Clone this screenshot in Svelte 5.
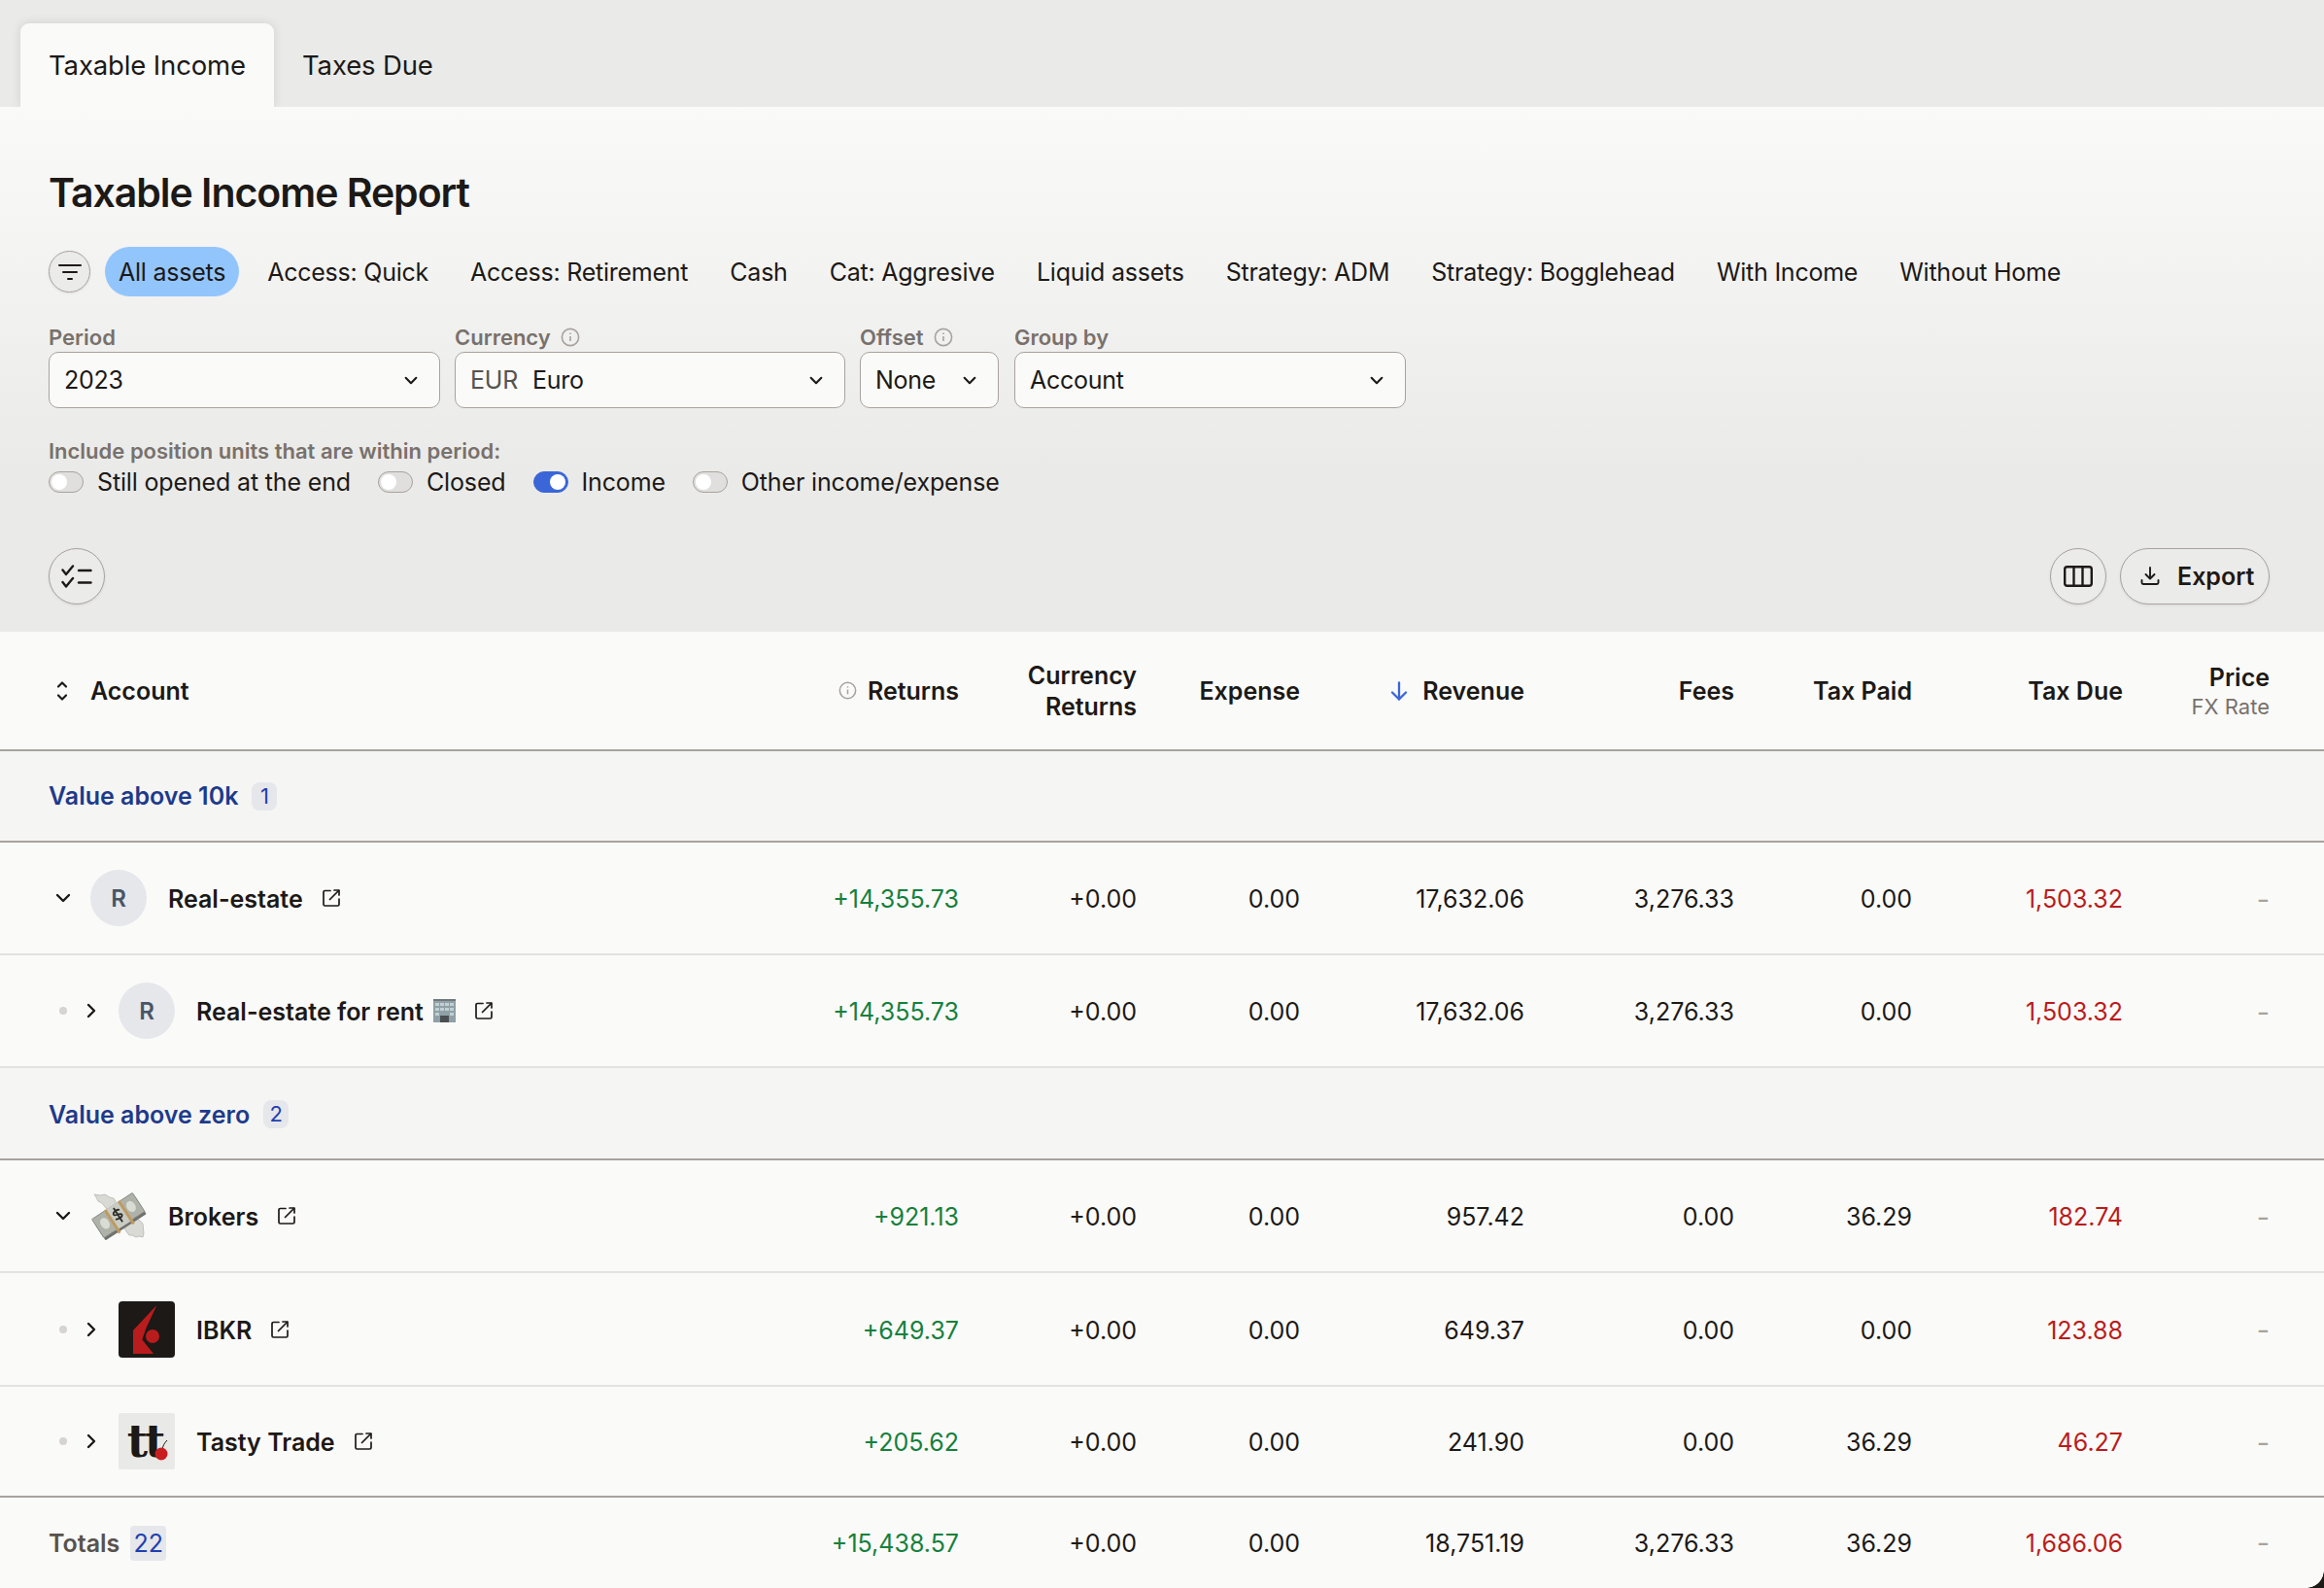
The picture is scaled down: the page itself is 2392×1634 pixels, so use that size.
<script>
    const chips = ['All assets', 'Access: Quick', 'Access: Retirement', 'Cash', 'Cat: Aggresive', 'Liquid assets', 'Strategy: ADM', 'Strategy: Bogglehead', 'With Income', 'Without Home'];
    const toggles = [
        { label: 'Still opened at the end', on: false },
        { label: 'Closed', on: false },
        { label: 'Income', on: true },
        { label: 'Other income/expense', on: false }
    ];
    const rows = [
        { group: 'Value above 10k', count: 1 },
        { name: 'Real-estate', logo: 'R', open: true, returns: '+14,355.73', revenue: '17,632.06', fees: '3,276.33', paid: '0.00', due: '1,503.32' },
        { name: 'Real-estate for rent', logo: 'R', child: true, building: true, returns: '+14,355.73', revenue: '17,632.06', fees: '3,276.33', paid: '0.00', due: '1,503.32' },
        { group: 'Value above zero', count: 2 },
        { name: 'Brokers', logo: 'money', open: true, returns: '+921.13', revenue: '957.42', fees: '0.00', paid: '36.29', due: '182.74' },
        { name: 'IBKR', logo: 'ibkr', child: true, returns: '+649.37', revenue: '649.37', fees: '0.00', paid: '0.00', due: '123.88' },
        { name: 'Tasty Trade', logo: 'tt', child: true, last: true, returns: '+205.62', revenue: '241.90', fees: '0.00', paid: '36.29', due: '46.27' }
    ];
</script>

{#snippet info(size)}
    <svg class="info" width={size} height={size} viewBox="0 0 20 20" fill="none" stroke="currentColor" stroke-width="1.6">
        <circle cx="10" cy="10" r="8.6" />
        <path d="M10 9v5" />
        <path d="M10 5.6v1.4" />
    </svg>
{/snippet}

{#snippet chevron()}
    <svg width="18" height="12" viewBox="0 0 18 12" fill="none" stroke="currentColor" stroke-width="2.4" stroke-linecap="round" stroke-linejoin="round">
        <path d="M3 3l6 6 6-6" />
    </svg>
{/snippet}

{#snippet launch()}
    <svg class="launch" width="18" height="18" viewBox="0 0 18 18" fill="none" stroke="currentColor" stroke-width="1.7" stroke-linecap="round" stroke-linejoin="round">
        <path d="M8 1.5H2.5a1.5 1.5 0 0 0-1.5 1.5v12.5A1.500 1.500 0 0 0 2.500 17h13a1.500 1.500 0 0 0 1.500-1.500V10" />
        <path d="M7.500 10.500 16.500 1.500" />
        <path d="M12 1h5v5" />
    </svg>
{/snippet}

<div class="page">
    <nav class="tabs">
        <button class="tab active">Taxable Income</button>
        <button class="tab">Taxes Due</button>
    </nav>

    <section class="panel">
        <h1>Taxable Income Report</h1>

        <div class="chips">
            <button class="round small" aria-label="Filter">
                <svg width="24" height="18" viewBox="0 0 24 18" fill="none" stroke="#1c1917" stroke-width="2" stroke-linecap="round">
                    <path d="M1 2h22" />
                    <path d="M5 9h14" />
                    <path d="M10 16h4" />
                </svg>
            </button>
            <div class="chip-list">
                {#each chips as chip, i}
                    <span class="chip" class:selected={i === 0}>{chip}</span>
                {/each}
            </div>
        </div>

        <div class="fields">
            <div class="field period">
                <span class="label">Period</span>
                <div class="select"><span>2023</span>{@render chevron()}</div>
            </div>
            <div class="field currency">
                <span class="label">Currency {@render info(20)}</span>
                <div class="select"><span><span class="code">EUR</span>Euro</span>{@render chevron()}</div>
            </div>
            <div class="field offset">
                <span class="label">Offset {@render info(20)}</span>
                <div class="select"><span>None</span>{@render chevron()}</div>
            </div>
            <div class="field groupby">
                <span class="label">Group by</span>
                <div class="select"><span>Account</span>{@render chevron()}</div>
            </div>
        </div>

        <p class="include">Include position units that are within period:</p>
        <div class="toggles">
            {#each toggles as t}
                <label class="toggle-item">
                    <span class="toggle" class:on={t.on}><span class="knob"></span></span>
                    {t.label}
                </label>
            {/each}
        </div>

        <div class="actions">
            <button class="round" aria-label="Select">
                <svg width="32" height="25" viewBox="0 0 32 25" fill="none" stroke="#1c1917" stroke-width="2.4" stroke-linecap="round" stroke-linejoin="round">
                    <path d="M1.500 5.500 5 10 12 1.500" />
                    <path d="M1.500 18 5 22.500 12 14" />
                    <path d="M18 6h12.500" />
                    <path d="M18 18.500h12.500" />
                </svg>
            </button>
            <div class="actions-right">
                <button class="round" aria-label="Columns">
                    <svg width="30" height="22" viewBox="0 0 30 22" fill="none" stroke="#1c1917" stroke-width="2.4">
                        <rect x="1.200" y="1.200" width="27.600" height="19.600" rx="2.500" />
                        <path d="M10.500 1v20" />
                        <path d="M19.500 1v20" />
                    </svg>
                </button>
                <button class="export">
                    <svg width="20" height="20" viewBox="0 0 20 20" fill="none" stroke="#1c1917" stroke-width="1.900" stroke-linecap="round" stroke-linejoin="round">
                        <path d="M10 1v11" />
                        <path d="M5.500 8 10 12.500 14.500 8" />
                        <path d="M1.500 14v2.500a1.500 1.500 0 0 0 1.500 1.500h14a1.500 1.500 0 0 0 1.500-1.500V14" />
                    </svg>
                    Export
                </button>
            </div>
        </div>
    </section>

    <table>
        <colgroup>
            <col style="width: 760px" />
            <col style="width: 227px" />
            <col style="width: 183px" />
            <col style="width: 168px" />
            <col style="width: 231px" />
            <col style="width: 216px" />
            <col style="width: 183px" />
            <col style="width: 217px" />
            <col style="width: 207px" />
        </colgroup>
        <thead>
            <tr>
                <th class="left">
                    <div class="account-head">
                        <svg width="14" height="22" viewBox="0 0 14 22" fill="none" stroke="#1c1917" stroke-width="2.2" stroke-linecap="round" stroke-linejoin="round">
                            <path d="M3 6.500 7 2.500l4 4" />
                            <path d="M3 15.500l4 4 4-4" />
                        </svg>
                        Account
                    </div>
                </th>
                <th><div class="returns-head">{@render info(19)}Returns</div></th>
                <th>Currency<br />Returns</th>
                <th>Expense</th>
                <th>
                    <div class="sorted">
                        <svg width="18" height="20" viewBox="0 0 18 20" fill="none" stroke="#3b66d8" stroke-width="2.300" stroke-linecap="round" stroke-linejoin="round">
                            <path d="M9 1.500v17" />
                            <path d="M2 11.500 9 18.500 16 11.500" />
                        </svg>
                        Revenue
                    </div>
                </th>
                <th>Fees</th>
                <th>Tax Paid</th>
                <th>Tax Due</th>
                <th class="last">Price<small>FX Rate</small></th>
            </tr>
        </thead>
        <tbody>
            {#each rows as row}
                {#if row.group}
                    <tr class="group">
                        <td colspan="9">
                            <div class="group-cell">
                                {row.group}<span class="badge">{row.count}</span>
                            </div>
                        </td>
                    </tr>
                {:else}
                    <tr class:last-row={row.last}>
                        <td>
                            <div class="account">
                                <div class="controls">
                                    {#if row.child}
                                        <span class="ctrl"><span class="dot"></span></span>
                                        <span class="ctrl"><span class="right-chev">{@render chevron()}</span></span>
                                    {:else}
                                        <span class="ctrl">{@render chevron()}</span>
                                    {/if}
                                </div>
                                {#if row.logo === 'R'}
                                    <span class="avatar">R</span>
                                {:else if row.logo === 'money'}
                                    <span class="logo">
                                        <svg width="58" height="58" viewBox="0 0 58 58">
                                            <g fill="#d9dad6" stroke="#b5b6b1" stroke-width="0.8">
                                                <path d="M4 7l6 1 5-1 5 3 4 1 3 5 1 5-6 4-6-4-4-5-4-2-2-4z" />
                                                <path d="M34 39l7-6 6-1 4 2 3 3 1 10-1 4-4-1-3 1-4-2-3 0-3-4-2-3z" />
                                            </g>
                                            <g transform="rotate(-33 29 29)">
                                                <rect x="4" y="23" width="50" height="20" rx="1" fill="#6f716c" />
                                                <rect x="4" y="17" width="50" height="23" rx="1" fill="#aeb2a9" stroke="#7f827b" stroke-width="0.8" />
                                                <ellipse cx="13" cy="28" rx="4.500" ry="6" fill="#d8dcd3" />
                                                <ellipse cx="45" cy="28" rx="4.500" ry="6" fill="#d8dcd3" />
                                                <rect x="19" y="16.500" width="20" height="24" fill="#c9ccc3" />
                                                <rect x="19" y="16.500" width="3" height="28" fill="#bd9a62" />
                                                <rect x="36" y="16.500" width="3" height="28" fill="#bd9a62" />
                                                <path d="M33 24.500c-1-2-7-2-7.500.5-.5 3 7.500 2 7 5-.5 2.500-6 2.300-8 .3M29 19.500v17" fill="none" stroke="#2b2b28" stroke-width="1.800" />
                                            </g>
                                        </svg>
                                    </span>
                                {:else if row.logo === 'ibkr'}
                                    <span class="logo ibkr">
                                        <svg width="58" height="58" viewBox="0 0 58 58">
                                            <path d="M39 4.500 15 30v24h20l-11-14 5-14z" fill="#b91c1c" />
                                            <path d="M39 4.500 27 30l-3 9 12 15H15V30.500z" fill="#b91c1c" />
                                            <circle cx="35" cy="36" r="7" fill="#b91c1c" />
                                        </svg>
                                    </span>
                                {:else}
                                    <span class="logo tt">
                                        tt
                                        <svg class="cherry" width="16" height="24" viewBox="0 0 16 24">
                                            <path d="M9 12c.5-4 2-7 5-10" fill="none" stroke="#1c1917" stroke-width="1" />
                                            <circle cx="8" cy="16" r="6.500" fill="#c81e1e" />
                                        </svg>
                                    </span>
                                {/if}
                                <span class="name">{row.name}</span>
                                {#if row.building}
                                    <svg class="building" width="23" height="24" viewBox="0 0 23 24">
                                        <rect x="0" y="1" width="23" height="23" fill="#8fa1a6" />
                                        <rect x="0" y="0" width="23" height="2" fill="#70787c" />
                                        <g fill="#c3d0d3">
                                            <rect x="2" y="4" width="4" height="3" /><rect x="7" y="4" width="4" height="3" /><rect x="12" y="4" width="4" height="3" /><rect x="17" y="4" width="4" height="3" />
                                            <rect x="2" y="9" width="4" height="3" /><rect x="7" y="9" width="4" height="3" /><rect x="12" y="9" width="4" height="3" /><rect x="17" y="9" width="4" height="3" />
                                            <rect x="2" y="14" width="4" height="3" /><rect x="17" y="14" width="4" height="3" />
                                        </g>
                                        <rect x="7" y="17" width="9" height="7" fill="#4b4f52" />
                                    </svg>
                                {/if}
                                {@render launch()}
                            </div>
                        </td>
                        <td class="gain">{row.returns}</td>
                        <td>+0.00</td>
                        <td>0.00</td>
                        <td>{row.revenue}</td>
                        <td>{row.fees}</td>
                        <td>{row.paid}</td>
                        <td class="loss">{row.due}</td>
                        <td class="last dash">-</td>
                    </tr>
                {/if}
            {/each}
        </tbody>
        <tfoot>
            <tr>
                <td><div class="totals">Totals<span class="total-badge">22</span></div></td>
                <td class="gain">+15,438.57</td>
                <td>+0.00</td>
                <td>0.00</td>
                <td>18,751.19</td>
                <td>3,276.33</td>
                <td>36.29</td>
                <td class="loss">1,686.06</td>
                <td class="last dash">-</td>
            </tr>
        </tfoot>
    </table>

    <div class="corner"></div>
</div>

<style>
    :global(body) {
        margin: 0;
        background: #fafaf8;
    }

    .page {
        position: relative;
        height: 1634px;
        overflow: hidden;
        font-family: Inter, "Noto Sans", sans-serif;
        font-size: 25px;
        color: #1c1917;
        background: #fafaf8;
    }

    button {
        font: inherit;
        color: inherit;
        cursor: pointer;
    }

    .tabs {
        display: flex;
        align-items: stretch;
        height: 110px;
        padding: 24px 0 0 21px;
        box-sizing: border-box;
        background: #eaeae8;
    }

    .tab {
        width: 261px;
        padding: 0 0 0 29px;
        border: 0;
        background: none;
        text-align: left;
        font-size: 27.500px;
        letter-spacing: -0.005em;
        border-radius: 9px 9px 0 0;
    }

    .tab.active {
        background: #fafaf8;
        box-shadow: 0 0 10px rgba(90, 90, 110, 0.18);
    }

    .panel {
        position: relative;
        height: 540px;
        box-sizing: border-box;
        padding: 63px 56px 0 50px;
        background: linear-gradient(#fafaf8, #eaeae8 70%);
    }

    h1 {
        margin: 0;
        font-size: 41px;
        line-height: 50px;
        font-weight: 600;
        letter-spacing: -0.025em;
    }

    .chips {
        display: flex;
        align-items: center;
        gap: 15px;
        margin-top: 31px;
    }

    .chip-list {
        display: flex;
        gap: 15px;
        letter-spacing: -0.0095em;
    }

    .chip {
        height: 51px;
        line-height: 52px;
        padding: 0 14px;
        border-radius: 26px;
    }

    .chip.selected {
        background: #93c5fd;
    }

    .round {
        display: flex;
        align-items: center;
        justify-content: center;
        width: 58px;
        height: 58px;
        padding: 0;
        border: 1px solid #a8a29e;
        border-radius: 50%;
        background: #ebebe9;
        box-shadow: 0 1px 3px rgba(0, 0, 0, 0.08);
    }

    .round.small {
        width: 43px;
        height: 43px;
    }

    .fields {
        display: flex;
        gap: 15px;
        margin-top: 28px;
    }

    .field {
        display: flex;
        flex-direction: column;
        gap: 1px;
    }

    .period, .groupby {
        width: 403px;
    }

    .currency {
        width: 402px;
    }

    .offset {
        width: 143px;
    }

    .groupby {
        margin-left: 1px;
    }

    .label {
        display: flex;
        align-items: center;
        gap: 10px;
        height: 28px;
        font-size: 22px;
        font-weight: 600;
        color: #78716c;
    }

    .info {
        color: #a8a29e;
        flex: none;
    }

    .select {
        display: flex;
        align-items: center;
        justify-content: space-between;
        height: 58px;
        box-sizing: border-box;
        padding: 0 21px 0 15px;
        border: 1px solid #a8a29e;
        border-radius: 10px;
        background: #fafaf8;
        letter-spacing: -0.01em;
    }

    .select svg {
        width: 16px;
        height: 11px;
    }

    .code {
        color: #57534e;
        margin-right: 15px;
    }

    .include {
        margin: 31px 0 0;
        font-size: 22px;
        line-height: 26px;
        font-weight: 600;
        color: #78716c;
    }

    .toggles {
        display: flex;
        gap: 28px;
        margin-top: 3px;
        height: 32px;
        letter-spacing: -0.006em;
    }

    .toggle-item {
        display: flex;
        align-items: center;
        gap: 14px;
    }

    .toggle {
        display: flex;
        width: 36px;
        height: 22px;
        box-sizing: border-box;
        padding: 2px;
        border: 1px solid #a8a29e;
        border-radius: 11px;
        background: #e0dfdd;
    }

    .toggle.on {
        justify-content: flex-end;
        background: #3b66d8;
        border-color: #3b66d8;
    }

    .knob {
        width: 16px;
        height: 16px;
        border-radius: 50%;
        background: #fff;
    }

    .actions {
        display: flex;
        justify-content: space-between;
        margin-top: 52px;
    }

    .actions-right {
        display: flex;
        gap: 14px;
    }

    .export {
        display: flex;
        align-items: center;
        gap: 18px;
        width: 154px;
        height: 58px;
        box-sizing: border-box;
        padding: 0 0 0 20px;
        border: 1px solid #a8a29e;
        border-radius: 29px;
        background: #ebebe9;
        font-weight: 600;
        box-shadow: 0 1px 3px rgba(0, 0, 0, 0.08);
    }

    table {
        width: 2392px;
        table-layout: fixed;
        border-collapse: separate;
        border-spacing: 0;
    }

    th, td {
        box-sizing: border-box;
        padding: 0;
        text-align: right;
        vertical-align: middle;
    }

    th {
        height: 123px;
        line-height: 32px;
        font-weight: 600;
        border-bottom: 2px solid #a8a29e;
    }

    th.left, td:first-child {
        text-align: left;
    }

    th.last, td.last {
        padding-right: 56px;
    }

    th small {
        display: block;
        font-size: 22px;
        line-height: 28px;
        font-weight: 400;
        color: #78716c;
    }

    .account-head {
        display: flex;
        align-items: center;
        gap: 22px;
        padding-left: 57px;
    }

    .returns-head, .sorted {
        display: flex;
        align-items: center;
        justify-content: flex-end;
    }

    .returns-head {
        gap: 11px;
    }

    .sorted {
        gap: 15px;
    }

    td {
        height: 116px;
        padding-top: 2px;
        border-bottom: 2px solid #e2e2e0;
    }

    .group td {
        height: 94px;
        padding-top: 0;
        background: #f5f5f4;
        border-bottom-color: #a8a29e;
    }

    tbody tr:nth-child(4) td {
        height: 95px;
        padding-top: 2px;
    }

    tbody tr:nth-child(6) td {
        height: 117px;
    }

    .last-row td {
        height: 114px;
        border-bottom-color: #a8a29e;
    }

    tfoot td {
        height: 93px;
        padding-top: 0;
        border-bottom: 0;
    }

    .group-cell {
        display: flex;
        align-items: center;
        gap: 14px;
        padding-left: 50px;
        font-weight: 600;
        color: #1e3a8a;
    }

    .badge {
        display: block;
        min-width: 26px;
        height: 29px;
        line-height: 29px;
        padding: 0 1px;
        box-sizing: border-box;
        border-radius: 8px;
        background: #e5e7eb;
        text-align: center;
        font-size: 22px;
        font-weight: 400;
        color: #1e40af;
    }

    .account {
        display: flex;
        align-items: center;
        padding-left: 50px;
        margin-top: -2px;
    }

    .controls {
        display: flex;
        margin-right: 14px;
    }

    .ctrl {
        display: flex;
        align-items: center;
        justify-content: center;
        width: 29px;
    }

    .dot {
        width: 8px;
        height: 8px;
        border-radius: 50%;
        background: #d6d3d1;
    }

    .right-chev {
        display: flex;
        transform: rotate(-90deg);
    }

    .avatar, .logo {
        flex: none;
        display: flex;
        align-items: center;
        justify-content: center;
        width: 58px;
        height: 58px;
    }

    .avatar {
        border-radius: 50%;
        background: #e5e7eb;
        color: #4b5563;
        font-size: 24px;
        font-weight: 600;
    }

    .ibkr {
        border-radius: 4px;
        background: #1c1917;
    }

    .tt {
        position: relative;
        box-sizing: border-box;
        padding-right: 4px;
        border-radius: 2px;
        background: #e9e9e7;
        font-family: "DejaVu Serif", serif;
        font-size: 46px;
        font-weight: 700;
        letter-spacing: -3px;
    }

    .cherry {
        position: absolute;
        right: 6px;
        bottom: 8px;
    }

    .name {
        margin-left: 22px;
        padding-top: 2px;
        font-weight: 600;
    }

    .building {
        margin-left: 10px;
    }

    .launch {
        flex: none;
        margin-left: 20px;
    }

    .gain {
        color: #15803d;
    }

    .loss {
        color: #b91c1c;
    }

    .dash {
        color: #a8a29e;
        font-size: 29px;
    }

    .totals {
        display: flex;
        align-items: center;
        gap: 11px;
        padding-left: 50px;
        font-weight: 600;
        color: #57534e;
    }

    .total-badge {
        display: block;
        width: 37px;
        height: 36px;
        line-height: 36px;
        border-radius: 4px;
        background: #e5e7eb;
        text-align: center;
        font-weight: 400;
        color: #1e40af;
    }

    .corner {
        position: absolute;
        right: 0;
        bottom: 0;
        width: 18px;
        height: 18px;
        background: radial-gradient(circle at 0 0, transparent 17.500px, #1c1917 18px);
    }
</style>
